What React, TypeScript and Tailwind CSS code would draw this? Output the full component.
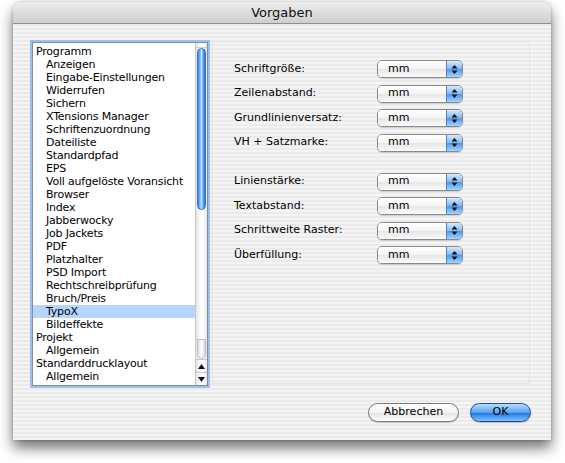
import React from "react"

const font = { fontFamily: '"DejaVu Sans", "Noto Sans", sans-serif' }

const treeItems: { label: string; level: number; selected?: boolean }[] = [
  { label: "Programm", level: 0 },
  { label: "Anzeigen", level: 1 },
  { label: "Eingabe-Einstellungen", level: 1 },
  { label: "Widerrufen", level: 1 },
  { label: "Sichern", level: 1 },
  { label: "XTensions Manager", level: 1 },
  { label: "Schriftenzuordnung", level: 1 },
  { label: "Dateiliste", level: 1 },
  { label: "Standardpfad", level: 1 },
  { label: "EPS", level: 1 },
  { label: "Voll aufgelöste Voransicht", level: 1 },
  { label: "Browser", level: 1 },
  { label: "Index", level: 1 },
  { label: "Jabberwocky", level: 1 },
  { label: "Job Jackets", level: 1 },
  { label: "PDF", level: 1 },
  { label: "Platzhalter", level: 1 },
  { label: "PSD Import", level: 1 },
  { label: "Rechtschreibprüfung", level: 1 },
  { label: "Bruch/Preis", level: 1 },
  { label: "TypoX", level: 1, selected: true },
  { label: "Bildeffekte", level: 1 },
  { label: "Projekt", level: 0 },
  { label: "Allgemein", level: 1 },
  { label: "Standarddrucklayout", level: 0 },
  { label: "Allgemein", level: 1 },
]

const groupA = ["Schriftgröße:", "Zeilenabstand:", "Grundlinienversatz:", "VH + Satzmarke:"]
const groupB = ["Linienstärke:", "Textabstand:", "Schrittweite Raster:", "Überfüllung:"]

// Aqua Popup-Menü
const PopupMenu = () => (
  <div className="flex h-[18px] w-[86px] overflow-hidden rounded-[5px] border border-[#8a8a8a] shadow-[0_1px_1px_rgba(0,0,0,0.15)]">
    <div className="flex flex-1 items-center bg-[linear-gradient(#ffffff,#f4f4f4_50%,#e6e6e6_51%,#fafafa)] pl-[10px] text-[11px] text-black">
      mm
    </div>
    <div className="flex w-[16px] items-center justify-center border-l border-[#5a7fc0] bg-[linear-gradient(#d6eaff,#7fb6f2_50%,#4d97ec_51%,#9fd3ff)]">
      <svg width="7" height="11" viewBox="0 0 7 11">
        <path d="M3.5 1 L6.5 4.5 L0.5 4.5 Z" fill="#111" />
        <path d="M3.5 10 L6.5 6.5 L0.5 6.5 Z" fill="#111" />
      </svg>
    </div>
  </div>
)

const SettingRow = ({ label }: { label: string }) => (
  <div className="flex h-[18px] items-center">
    <span className="w-[143px] text-[11px] text-black">{label}</span>
    <PopupMenu />
  </div>
)

const Scrollbar = () => (
  <div className="flex w-[12px] flex-col border-l border-[#c8c8c8] bg-[linear-gradient(90deg,#e4e4e4,#fbfbfb_40%,#ffffff_60%,#e8e8e8)]">
    <div className="h-[5px] border-b border-[#d0d0d0]" />
    <div className="mx-[1px] h-[162px] rounded-full border border-[#3a6fc4] bg-[linear-gradient(90deg,#3a7fe0,#8cc4ff_35%,#bfe0ff_50%,#5ea2f0_75%,#2f6fd0)]" />
    <div className="flex-1" />
    <div className="mx-[1px] h-[20px] rounded-b-full border border-[#bdbdbd] bg-[linear-gradient(90deg,#dcdcdc,#ffffff_50%,#d8d8d8)]" />
    <div className="flex h-[13px] items-center justify-center border-t border-[#c8c8c8]">
      <svg width="7" height="5" viewBox="0 0 7 5">
        <path d="M3.5 0 L7 5 L0 5 Z" fill="#111" />
      </svg>
    </div>
    <div className="flex h-[13px] items-center justify-center border-t border-[#c8c8c8]">
      <svg width="7" height="5" viewBox="0 0 7 5">
        <path d="M3.5 5 L7 0 L0 0 Z" fill="#111" />
      </svg>
    </div>
  </div>
)

export default function App() {
  return (
    <div className="h-[463px] w-[565px] bg-white pl-[13px] pt-[2px]" style={font}>
      <div className="flex h-[438px] w-[538px] flex-col overflow-hidden rounded-t-[7px] shadow-[0_8px_14px_rgba(0,0,0,0.55),0_0_3px_rgba(0,0,0,0.25)]">
        {/* Titelleiste */}
        <div className="flex h-[22px] items-center justify-center border-b border-[#8f8f8f] bg-[linear-gradient(#ededed,#dcdcdc_55%,#cfcfcf)] text-[13px] text-[#111]">
          Vorgaben
        </div>

        {/* Inhalt */}
        <div className="flex flex-1 flex-col bg-[repeating-linear-gradient(#ebebeb_0px,#ebebeb_2px,#f4f4f4_2px,#f4f4f4_4px)] pl-[19px] pr-[20px] pt-[17px]">
          <div className="flex items-start">
            {/* Liste */}
            <div className="mt-[1px] flex h-[344px] w-[176px] border border-[#7d8ea6] shadow-[0_0_0_2px_#9cc2ec]">
              <div className="flex-1 overflow-hidden bg-white pt-[2px]">
                {treeItems.map((item, i) => (
                  <div
                    key={i}
                    className={`flex h-[13px] items-center whitespace-nowrap text-[11px] leading-none tracking-[-0.2px] text-black ${
                      item.level ? "pl-[13px]" : "pl-[3px]"
                    } ${item.selected ? "bg-[#b5d4fe]" : ""}`}
                  >
                    {item.label}
                  </div>
                ))}
              </div>
              <Scrollbar />
            </div>

            {/* Gruppe */}
            <div className="ml-[4px] h-[343px] w-[318px] border border-[#e2e2e2] pl-[21px] pt-[18px]">
              <div className="flex flex-col gap-[6.5px]">
                {groupA.map((l) => (
                  <SettingRow key={l} label={l} />
                ))}
              </div>
              <div className="mt-[21px] flex flex-col gap-[6.5px]">
                {groupB.map((l) => (
                  <SettingRow key={l} label={l} />
                ))}
              </div>
            </div>
          </div>

          {/* Buttons */}
          <div className="mt-[17px] flex justify-end gap-[11px]">
            <button className="flex h-[19px] w-[91px] items-center justify-center rounded-full border border-[#7a7a7a] bg-[linear-gradient(#ffffff,#f2f2f2_50%,#e2e2e2_51%,#fdfdfd)] text-[11px] text-black shadow-[0_1px_1px_rgba(0,0,0,0.2)]">
              Abbrechen
            </button>
            <button className="flex h-[19px] w-[61px] items-center justify-center rounded-full border border-[#1f4d9e] bg-[linear-gradient(#b9dcff,#5aa2f0_50%,#1f72e0_51%,#7fc2ff)] text-[11px] text-black shadow-[0_1px_1px_rgba(0,0,0,0.25)]">
              OK
            </button>
          </div>
        </div>
      </div>
    </div>
  )
}
